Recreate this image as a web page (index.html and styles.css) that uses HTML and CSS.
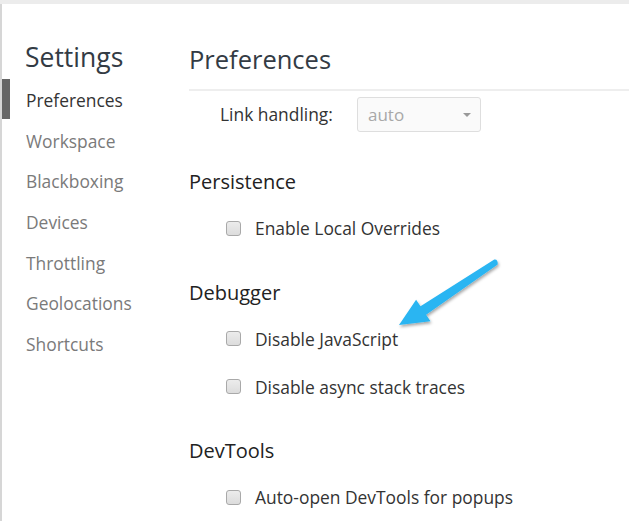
FILE: index.html
```html
<!DOCTYPE html>
<html>
<head>
<meta charset="utf-8">
<link rel="stylesheet" href="styles.css">
</head>
<body>
<div class="frame">
  <div class="window">
    <nav class="sidebar">
      <h1 class="title">Settings</h1>
      <ul class="tabs">
        <li class="tab active">Preferences</li>
        <li class="tab">Workspace</li>
        <li class="tab">Blackboxing</li>
        <li class="tab">Devices</li>
        <li class="tab">Throttling</li>
        <li class="tab">Geolocations</li>
        <li class="tab">Shortcuts</li>
      </ul>
    </nav>
    <main class="content">
      <h2 class="page-title">Preferences</h2>
      <div class="rows">
        <div class="row select-row">
          <span class="label">Link handling:</span>
          <div class="select"><span class="select-value">auto</span><span class="caret"></span></div>
        </div>
        <h3 class="section">Persistence</h3>
        <div class="row check-row"><span class="checkbox"></span><span class="label">Enable Local Overrides</span></div>
        <h3 class="section">Debugger</h3>
        <div class="row check-row"><span class="checkbox"></span><span class="label">Disable JavaScript</span></div>
        <div class="row check-row"><span class="checkbox"></span><span class="label">Disable async stack traces</span></div>
        <h3 class="section">DevTools</h3>
        <div class="row check-row"><span class="checkbox"></span><span class="label">Auto-open DevTools for popups</span></div>
      </div>
    </main>
  </div>
  <svg class="arrow" width="629" height="521" viewBox="0 0 629 521">
    <defs>
      <filter id="sh" x="-20%" y="-20%" width="140%" height="140%">
        <feDropShadow dx="1" dy="2" stdDeviation="1.6" flood-color="#000" flood-opacity="0.35"/>
      </filter>
    </defs>
    <path filter="url(#sh)" fill="#29b5f2" d="M399 325 L430.5 321.3 L426.1 314.7 L497.7 264.5 Q498 259 494.3 259.5 L420.5 306.3 L416.1 299.7 Z"/>
  </svg>
</div>
</body>
</html>
```
FILE: styles.css
```css
* { box-sizing: border-box; }
html, body { margin: 0; padding: 0; background: #fff; }
body {
  font-family: "Open Sans", "Noto Sans", sans-serif;
  width: 629px;
  height: 521px;
  overflow: hidden;
}
.frame {
  position: relative;
  width: 629px;
  height: 521px;
  border-top: 4px solid #ececec;
  background: #fff;
}
.window {
  display: flex;
  height: 100%;
  border-left: 2px solid #d6d6d6;
}
.sidebar {
  width: 186px;
  flex: none;
}
.title {
  margin: 34px 0 0 23px;
  font-size: 26.5px;
  font-weight: 400;
  color: #333b44;
  line-height: 38px;
}
.tabs {
  list-style: none;
  margin: 4px 0 0 0;
  padding: 0;
}
.tab {
  position: relative;
  height: 40.7px;
  line-height: 40px;
  padding-left: 24px;
  font-size: 17.4px;
  color: #7a7a7a;
}
.tab.active { color: #333; }
.tab.active::before {
  content: "";
  position: absolute;
  left: 0;
  top: -1px;
  width: 8px;
  height: 40px;
  background: #666;
}
.content {
  flex: 1;
  padding-left: 1px;
}
.page-title {
  margin: 36px 0 0 0;
  font-size: 25.5px;
  font-weight: 400;
  color: #333b44;
  line-height: 38px;
  padding-bottom: 11px;
  border-bottom: 2px solid #eeeeee;
}
.rows { display: flex; flex-direction: column; }
.row {
  display: flex;
  align-items: center;
  font-size: 17.4px;
  color: #333;
}
.select-row {
  height: 34px;
  margin-top: 6px;
  padding-left: 31px;
}
.select-row .label { width: 137px; }
.select {
  position: relative;
  width: 124px;
  height: 35px;
  border: 1px solid #dedede;
  border-radius: 3px;
  background: #fafafa;
  display: flex;
  align-items: center;
  padding-left: 10px;
}
.select-value { color: #a8a8a8; font-size: 17px; }
.caret {
  position: absolute;
  right: 9px;
  top: 15px;
  width: 0;
  height: 0;
  border-left: 4.5px solid transparent;
  border-right: 4.5px solid transparent;
  border-top: 4.5px solid #999;
}
.section {
  margin: 0;
  font-size: 20px;
  font-weight: 400;
  color: #222;
  height: 30px;
  line-height: 30px;
}
.select-row + .section { margin-top: 36px; }
.check-row + .section { margin-top: 34.5px; }
.check-row {
  height: 30px;
  padding-left: 37px;
}
.section + .check-row { margin-top: 16px; }
.check-row + .check-row { margin-top: 18px; }
.checkbox {
  width: 15px;
  height: 15px;
  border: 1px solid #a9a9a9;
  border-radius: 3px;
  background: linear-gradient(#ececec, #dcdcdc);
  margin-right: 14px;
  flex: none;
}
.arrow {
  position: absolute;
  left: 0;
  top: -4px;
  pointer-events: none;
}
```
